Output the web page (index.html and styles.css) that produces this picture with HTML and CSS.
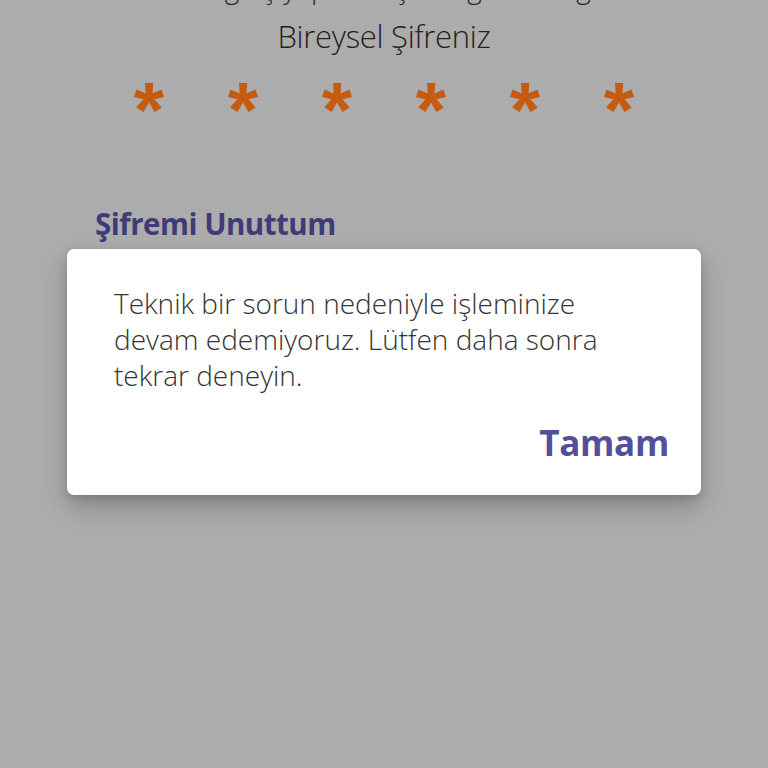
FILE: index.html
```html
<!DOCTYPE html>
<html lang="tr">
<head>
<meta charset="utf-8">
<link rel="stylesheet" href="styles.css">
</head>
<body>
<div class="screen">
  <div class="cut-line"><span class="cut-text">Lütfen giriş yapmak için bilgilerinizi girin</span></div>
  <div class="label">Bireysel Şifreniz</div>
  <div class="stars">
    <span class="star">*</span><span class="star">*</span><span class="star">*</span><span class="star">*</span><span class="star">*</span><span class="star">*</span>
  </div>
  <div class="forgot">Şifremi Unuttum</div>
  <div class="dialog">
    <p class="msg">Teknik bir sorun nedeniyle işleminize<br>devam edemiyoruz. Lütfen daha sonra<br>tekrar deneyin.</p>
    <div class="actions"><span class="ok">Tamam</span></div>
  </div>
</div>
</body>
</html>
```
FILE: styles.css
```css
html, body {
  margin: 0;
  padding: 0;
  background: #acacac;
}
.screen {
  width: 768px;
  height: 768px;
  overflow: hidden;
  background: #acacac;
  font-family: "Open Sans", "Noto Sans", sans-serif;
  display: flex;
  flex-direction: column;
}
.cut-line {
  height: 18px;
  overflow: hidden;
  display: flex;
  justify-content: center;
  align-items: flex-end;
}
.cut-text {
  display: block;
  margin-bottom: 15px;
  font-size: 28px;
  line-height: 32px;
  height: 32px;
  flex-shrink: 0;
  color: #2a2a2a;
  font-weight: 300;
  white-space: nowrap;
}
.label {
  text-align: center;
  font-size: 31px;
  line-height: 36px;
  color: #222222;
  font-weight: 300;
  letter-spacing: -0.3px;
}
.stars {
  display: flex;
  justify-content: center;
  margin-top: 11px;
  height: 60px;
}
.star {
  width: 94px;
  text-align: center;
  font-family: "Liberation Sans", sans-serif;
  font-weight: 700;
  font-size: 78px;
  line-height: 90px;
  color: #c65a0e;
}
.forgot {
  margin-top: 81px;
  margin-left: 95px;
  font-size: 29.5px;
  line-height: 36px;
  font-weight: 700;
  color: #3e3b78;
  letter-spacing: -0.5px;
}
.dialog {
  margin: 7px 0 0 67px;
  width: 634px;
  box-sizing: border-box;
  background: #ffffff;
  border-radius: 7px;
  box-shadow: 0 12px 24px rgba(0,0,0,0.22), 0 3px 8px rgba(0,0,0,0.12);
  padding: 36px 47px 30px 47px;
}
.msg {
  margin: 0;
  font-size: 28px;
  line-height: 36px;
  color: #333333;
  font-weight: 300;
}
.actions {
  display: flex;
  justify-content: flex-end;
  margin-top: 28px;
  margin-right: -15px;
}
.ok {
  font-size: 35px;
  line-height: 44px;
  font-weight: 700;
  color: #534f9a;
  letter-spacing: -0.3px;
}
```
